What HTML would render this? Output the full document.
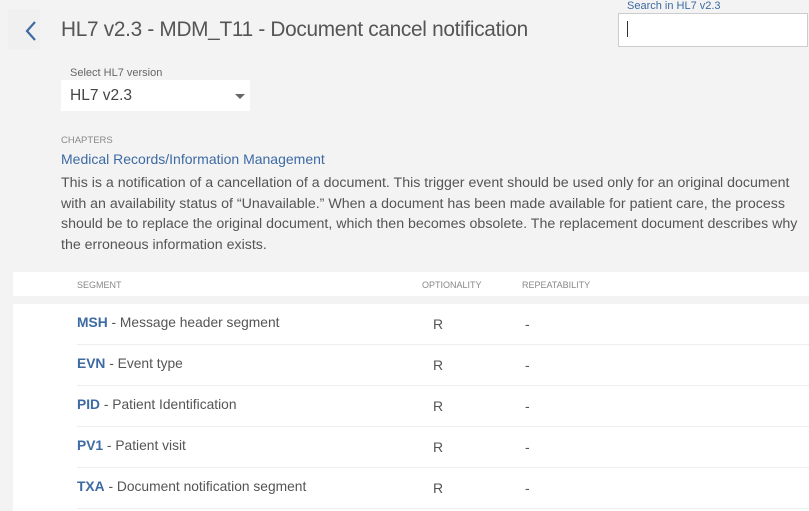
<html><head><style>
body{margin:0;width:809px;height:511px;background:#f3f3f3;font-family:"Liberation Sans",sans-serif;position:relative;overflow:hidden;color:#555}
.a{position:absolute;white-space:nowrap}
</style></head><body>
<div class="a" style="left:8px;top:9px;width:32px;height:40px;background:#f0f0f0"></div>
<svg class="a" style="left:24px;top:20px" width="14" height="22"><path d="M11 2 L3 11 L11 20" stroke="#3d6aa3" stroke-width="2.2" fill="none"/></svg>
<div class="a" style="left:61px;top:18px;font-size:20.8px;color:#555;letter-spacing:-0.3px">HL7 v2.3 - MDM_T11 - Document cancel notification</div>
<div class="a" style="left:627px;top:0px;font-size:11px;color:#3d6aa3">Search in HL7 v2.3</div>
<div class="a" style="left:618px;top:13px;width:188px;height:32px;background:#fff;border:1px solid #ccc"></div>
<div class="a" style="left:627px;top:21px;width:1px;height:16px;background:#333"></div>
<div class="a" style="left:70px;top:67px;font-size:11px;color:#666">Select HL7 version</div>
<div class="a" style="left:61px;top:80px;width:189px;height:31px;background:#fff"></div>
<div class="a" style="left:70px;top:87px;font-size:15.5px;color:#444">HL7 v2.3</div>
<div class="a" style="left:235px;top:94px;width:0;height:0;border-left:5px solid transparent;border-right:5px solid transparent;border-top:5px solid #666"></div>
<div class="a" style="left:61px;top:135px;font-size:9.5px;color:#888">CHAPTERS</div>
<div class="a" style="left:61px;top:151px;font-size:14px;color:#3d6aa3">Medical Records/Information Management</div>
<div class="a" style="left:61px;top:173px;font-size:14.2px;line-height:20.6px;color:#555;white-space:normal;width:740px">This is a notification of a cancellation of a document. This trigger event should be used only for an original document with an availability status of “Unavailable.” When a document has been made available for patient care, the process should be to replace the original document, which then becomes obsolete. The replacement document describes why the erroneous information exists.</div>
<div class="a" style="left:13px;top:272px;width:796px;height:24px;background:#fff"></div>
<div class="a" style="left:77px;top:280px;font-size:9px;color:#888">SEGMENT</div>
<div class="a" style="left:422px;top:280px;font-size:9px;color:#888">OPTIONALITY</div>
<div class="a" style="left:522px;top:280px;font-size:9px;color:#888">REPEATABILITY</div>
<div class="a" style="left:13px;top:304px;width:796px;height:207px;background:#fff"></div>
<div class="a" style="left:77px;top:344px;width:732px;height:1px;background:#eee"></div>
<div class="a" style="left:77px;top:385px;width:732px;height:1px;background:#eee"></div>
<div class="a" style="left:77px;top:426px;width:732px;height:1px;background:#eee"></div>
<div class="a" style="left:77px;top:467px;width:732px;height:1px;background:#eee"></div>
<div class="a" style="left:77px;top:508px;width:732px;height:1px;background:#eee"></div>
<div class="a" style="left:77px;top:315px;font-size:13.8px"><b style="color:#3d6aa3">MSH</b> - Message header segment</div>
<div class="a" style="left:77px;top:356px;font-size:13.8px"><b style="color:#3d6aa3">EVN</b> - Event type</div>
<div class="a" style="left:77px;top:397px;font-size:13.8px"><b style="color:#3d6aa3">PID</b> - Patient Identification</div>
<div class="a" style="left:77px;top:438px;font-size:13.8px"><b style="color:#3d6aa3">PV1</b> - Patient visit</div>
<div class="a" style="left:77px;top:479px;font-size:13.8px"><b style="color:#3d6aa3">TXA</b> - Document notification segment</div>
<div class="a" style="left:433px;top:316px;font-size:14px">R</div><div class="a" style="left:525px;top:316px;font-size:14px">-</div>
<div class="a" style="left:433px;top:357px;font-size:14px">R</div><div class="a" style="left:525px;top:357px;font-size:14px">-</div>
<div class="a" style="left:433px;top:398px;font-size:14px">R</div><div class="a" style="left:525px;top:398px;font-size:14px">-</div>
<div class="a" style="left:433px;top:439px;font-size:14px">R</div><div class="a" style="left:525px;top:439px;font-size:14px">-</div>
<div class="a" style="left:433px;top:480px;font-size:14px">R</div><div class="a" style="left:525px;top:480px;font-size:14px">-</div>
</body></html>
